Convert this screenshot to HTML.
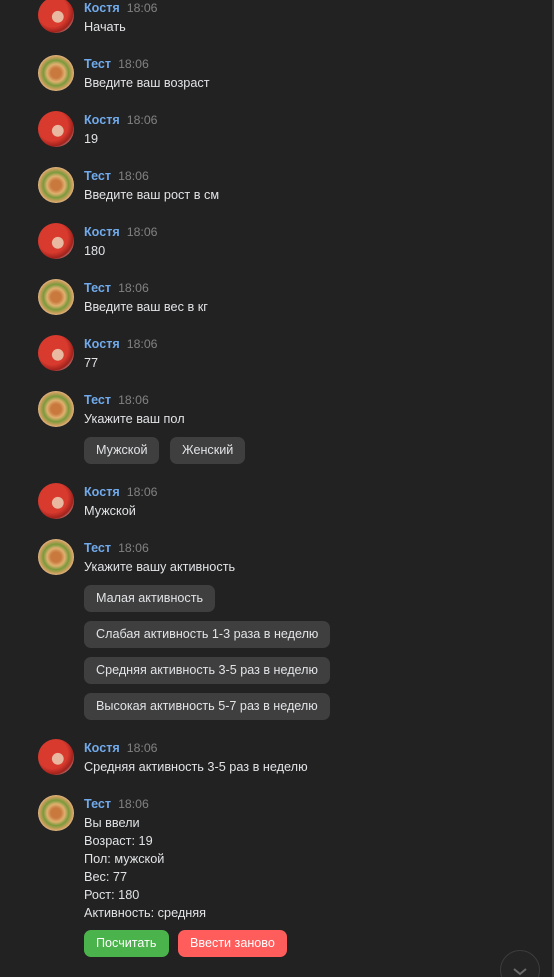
<!DOCTYPE html>
<html><head><meta charset="utf-8"><style>
html,body{margin:0;width:554px;height:977px;overflow:hidden}
body{background:#222222;font-family:"Liberation Sans",Arial,sans-serif;position:relative}
.rb{position:absolute;right:0;top:0;width:2px;height:977px;background:#3a3a3a}
.av{position:absolute;left:38px;width:36px;height:36px;border-radius:50%;overflow:hidden}
.k{background:radial-gradient(circle at 55% 55%,#e8b8a0 0 20%,transparent 22%),radial-gradient(circle at 40% 40%,#d83a2e 0 50%,#a0221c 68%,#d8d0d0 85%)}
.t{background:radial-gradient(circle at 50% 50%,#c9793e 0 20%,#e0b070 35%,#7a9a3c 50%,#d2a060 65%,#efe2c8 80%)}
.n{position:absolute;left:84px;font-size:12.6px;font-weight:bold;color:#71aaeb;line-height:16px}
.n span{font-weight:normal;color:#828282;margin-left:7px;font-size:12.3px}
.m{position:absolute;left:84px;font-size:12.7px;color:#e1e3e6;line-height:18px;top:0}
.b{position:absolute;left:84px;height:27px;line-height:27px;padding:0 12px;border-radius:7px;background:#3f3f3f;color:#e1e3e6;font-size:12.6px}
.circ{position:absolute;left:500px;top:950px;width:38px;height:38px;border-radius:50%;border:1px solid #3c3c3c;background:#242424}
</style></head><body>
<div class="rb"></div>

<div class="av k" style="top:-3px"></div><div class="n" style="top:0">Костя<span>18:06</span></div><div class="m" style="top:18px">Начать</div>
<div class="av t" style="top:55px"></div><div class="n" style="top:56px">Тест<span>18:06</span></div><div class="m" style="top:74px">Введите ваш возраст</div>
<div class="av k" style="top:111px"></div><div class="n" style="top:112px">Костя<span>18:06</span></div><div class="m" style="top:130px">19</div>
<div class="av t" style="top:167px"></div><div class="n" style="top:168px">Тест<span>18:06</span></div><div class="m" style="top:186px">Введите ваш рост в см</div>
<div class="av k" style="top:223px"></div><div class="n" style="top:224px">Костя<span>18:06</span></div><div class="m" style="top:242px">180</div>
<div class="av t" style="top:279px"></div><div class="n" style="top:280px">Тест<span>18:06</span></div><div class="m" style="top:298px">Введите ваш вес в кг</div>
<div class="av k" style="top:335px"></div><div class="n" style="top:336px">Костя<span>18:06</span></div><div class="m" style="top:354px">77</div>
<div class="av t" style="top:391px"></div><div class="n" style="top:392px">Тест<span>18:06</span></div><div class="m" style="top:410px">Укажите ваш пол</div>
<div class="b" style="top:437px">Мужской</div><div class="b" style="top:437px;left:170px">Женский</div>
<div class="av k" style="top:483px"></div><div class="n" style="top:484px">Костя<span>18:06</span></div><div class="m" style="top:502px">Мужской</div>
<div class="av t" style="top:539px"></div><div class="n" style="top:540px">Тест<span>18:06</span></div><div class="m" style="top:558px">Укажите вашу активность</div>
<div class="b" style="top:585px">Малая активность</div>
<div class="b" style="top:621px">Слабая активность 1-3 раза в неделю</div>
<div class="b" style="top:657px">Средняя активность 3-5 раз в неделю</div>
<div class="b" style="top:693px">Высокая активность 5-7 раз в неделю</div>
<div class="av k" style="top:739px"></div><div class="n" style="top:740px">Костя<span>18:06</span></div><div class="m" style="top:758px">Средняя активность 3-5 раз в неделю</div>
<div class="av t" style="top:795px"></div><div class="n" style="top:796px">Тест<span>18:06</span></div>
<div class="m" style="top:814px">Вы ввели<br>Возраст: 19<br>Пол: мужской<br>Вес: 77<br>Рост: 180<br>Активность: средняя</div>
<div class="b" style="top:930px;background:#4bb34b;color:#fff">Посчитать</div>
<div class="b" style="top:930px;left:178px;background:#ff5c5c;color:#fff">Ввести заново</div>
<div class="circ"><svg width="38" height="38" style="position:absolute;left:0;top:0"><path d="M13 18 L19 23 L25 18" stroke="#6a6a6a" stroke-width="2" fill="none"/></svg></div>
</body></html>
